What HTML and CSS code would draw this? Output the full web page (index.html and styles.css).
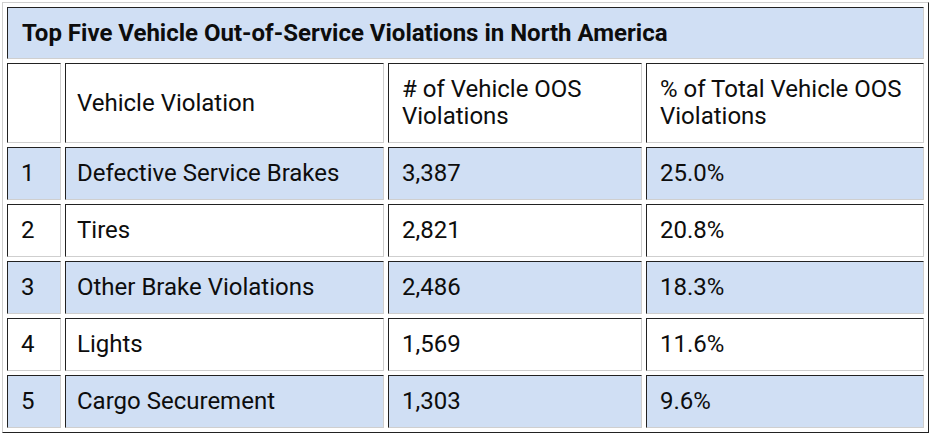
FILE: index.html
```html
<!DOCTYPE html>
<html>
<head>
<meta charset="utf-8">
<link rel="stylesheet" href="styles.css">
</head>
<body>
<table class="oos">
  <colgroup>
    <col class="c1"><col class="c2"><col class="c3"><col class="c4">
  </colgroup>
  <tr class="title-row"><th colspan="4" class="title">Top Five Vehicle Out-of-Service Violations in North America</th></tr>
  <tr class="head-row"><td></td><td class="name">Vehicle Violation</td><td># of Vehicle OOS Violations</td><td>% of Total Vehicle OOS Violations</td></tr>
  <tr class="row alt"><td>1</td><td class="name">Defective Service Brakes</td><td>3,387</td><td>25.0%</td></tr>
  <tr class="row"><td>2</td><td class="name">Tires</td><td>2,821</td><td>20.8%</td></tr>
  <tr class="row alt"><td>3</td><td class="name">Other Brake Violations</td><td>2,486</td><td>18.3%</td></tr>
  <tr class="row"><td>4</td><td class="name">Lights</td><td>1,569</td><td>11.6%</td></tr>
  <tr class="row alt"><td>5</td><td class="name">Cargo Securement</td><td>1,303</td><td>9.6%</td></tr>
</table>
</body>
</html>
```
FILE: styles.css
```css
html, body {
  margin: 0;
  background: #ffffff;
}
body {
  padding: 2px;
  font-family: Roboto, "Liberation Sans", Arial, sans-serif;
  color: #0d0d0d;
}
.oos {
  table-layout: fixed;
  border-collapse: separate;
  border-spacing: 4px;
  width: 927px;
  border: 1px solid;
  border-color: #cfcfcf #222222 #222222 #cfcfcf;
}
.c1 { width: 54px; }
.c2 { width: 319px; }
.c3 { width: 254px; }
.c4 { width: 278px; }
.oos th, .oos td {
  box-sizing: border-box;
  border: 1px solid;
  border-color: #222222 #cfcfcf #cfcfcf #222222;
  padding: 0 13px;
  font-size: 24px;
  line-height: 27px;
  text-align: left;
  vertical-align: middle;
  font-weight: 400;
}
.oos td.name { padding-left: 11px; }
.oos th.title {
  height: 52px;
  padding-left: 14px;
  font-weight: 700;
  background: #d0dff4;
}
.head-row td { height: 80px; }
.row td { height: 53px; }
.row.alt td { background: #d0dff4; }
```
